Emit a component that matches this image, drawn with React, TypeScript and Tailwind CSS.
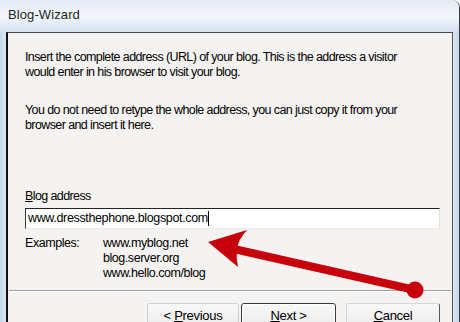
import React from "react";

function RedArrow() {
  return (
    <svg
      className="absolute left-0 top-0 pointer-events-none"
      width="460"
      height="322"
      viewBox="0 0 460 322"
    >
      <line x1="234" y1="249" x2="415" y2="290" stroke="#c8000c" strokeWidth="8" strokeLinecap="round" />
      <path d="M208 242 L247 230 Q238 240 237 249 Q236 258 238 267 Z" fill="#c8000c" />
      <circle cx="415" cy="290" r="8.5" fill="#c8000c" />
    </svg>
  );
}

export default function App() {
  return (
    <div className="relative w-[460px] h-[322px] overflow-hidden bg-[#cddff1] border-r border-[#3c3c3c] rounded-tr-[8px] font-['Liberation_Sans',Arial,sans-serif] text-black">
      {/* Title bar */}
      <div className="h-[32px] flex items-center pl-[8px] bg-gradient-to-b from-[#e3eaf3] via-[#f2f6fa] to-[#d4e2f1]">
        <span className="text-[13px] text-[#1e1e1e] tracking-[0.1px] -mt-[2px]">Blog-Wizard</span>
      </div>

      <div className="flex h-[290px]">
        <div className="w-[6px] bg-gradient-to-r from-[#c6d9ec] to-[#dbe7f3]" />

        {/* Client area */}
        <div className="flex-1 flex flex-col border-l-2 border-t border-r border-l-[#111] border-t-[#4a4a4a] border-r-[#555] bg-[#f4f3f1] text-[12.5px] tracking-[-0.6px] leading-[15px]">
          <div className="pl-[17px] pt-[17px]">
            <p>
              Insert the complete address (URL) of your blog. This is the address a visitor
              <br />
              would enter in his browser to visit your blog.
            </p>
            <p className="mt-[23px]">
              You do not need to retype the whole address, you can just copy it from your
              <br />
              browser and insert it here.
            </p>

            <label className="block mt-[56px]">
              <span className="underline">B</span>log address
            </label>
            <div className="mt-[4px] w-[415px] h-[21px] bg-white border-t border-l border-t-[#222] border-l-[#333] border-r border-b border-r-[#e2e2e2] border-b-[#ececec] flex items-center pl-[2px] tracking-[-0.35px]">
              <span>www.dressthephone.blogspot.com</span>
              <span className="w-px h-[15px] bg-black" />
            </div>

            <div className="mt-[7px] grid grid-cols-[78px_1fr] tracking-[-0.45px]">
              <span>Examples:</span>
              <div className="flex flex-col">
                <span>www.myblog.net</span>
                <span>blog.server.org</span>
                <span>www.hello.com/blog</span>
              </div>
            </div>
          </div>

          {/* Separator */}
          <div className="mt-[9px] mx-[1px] border-t border-[#a0a0a0] border-b border-b-white" />

          {/* Buttons */}
          <div className="flex pl-[139px] mt-[11px] text-[13px] tracking-[-0.3px]">
            <button className="w-[92px] h-[24px] rounded-[3px] border border-[#cfcfcf] bg-gradient-to-b from-[#f8f8f8] to-[#ececec] pt-[1px]">
              &lt; <span className="underline">P</span>revious
            </button>
            <button className="ml-[2px] w-[95px] h-[24px] rounded-[3px] border border-[#3a3a3a] bg-gradient-to-b from-[#f8f8f8] to-[#ececec] shadow-[inset_0_0_0_1px_#ffffff] pt-[1px]">
              <span className="underline">N</span>ext &gt;
            </button>
            <button className="ml-[10px] w-[94px] h-[24px] rounded-[3px] border border-[#d6d6d6] border-r-[#5a5a5a] bg-gradient-to-b from-[#f8f8f8] to-[#ececec] pt-[1px]">
              <span className="underline">C</span>ancel
            </button>
          </div>
        </div>

        <div className="w-[6px] bg-gradient-to-r from-[#dbe7f3] to-[#c6d9ec]" />
      </div>

      <RedArrow />
    </div>
  );
}
